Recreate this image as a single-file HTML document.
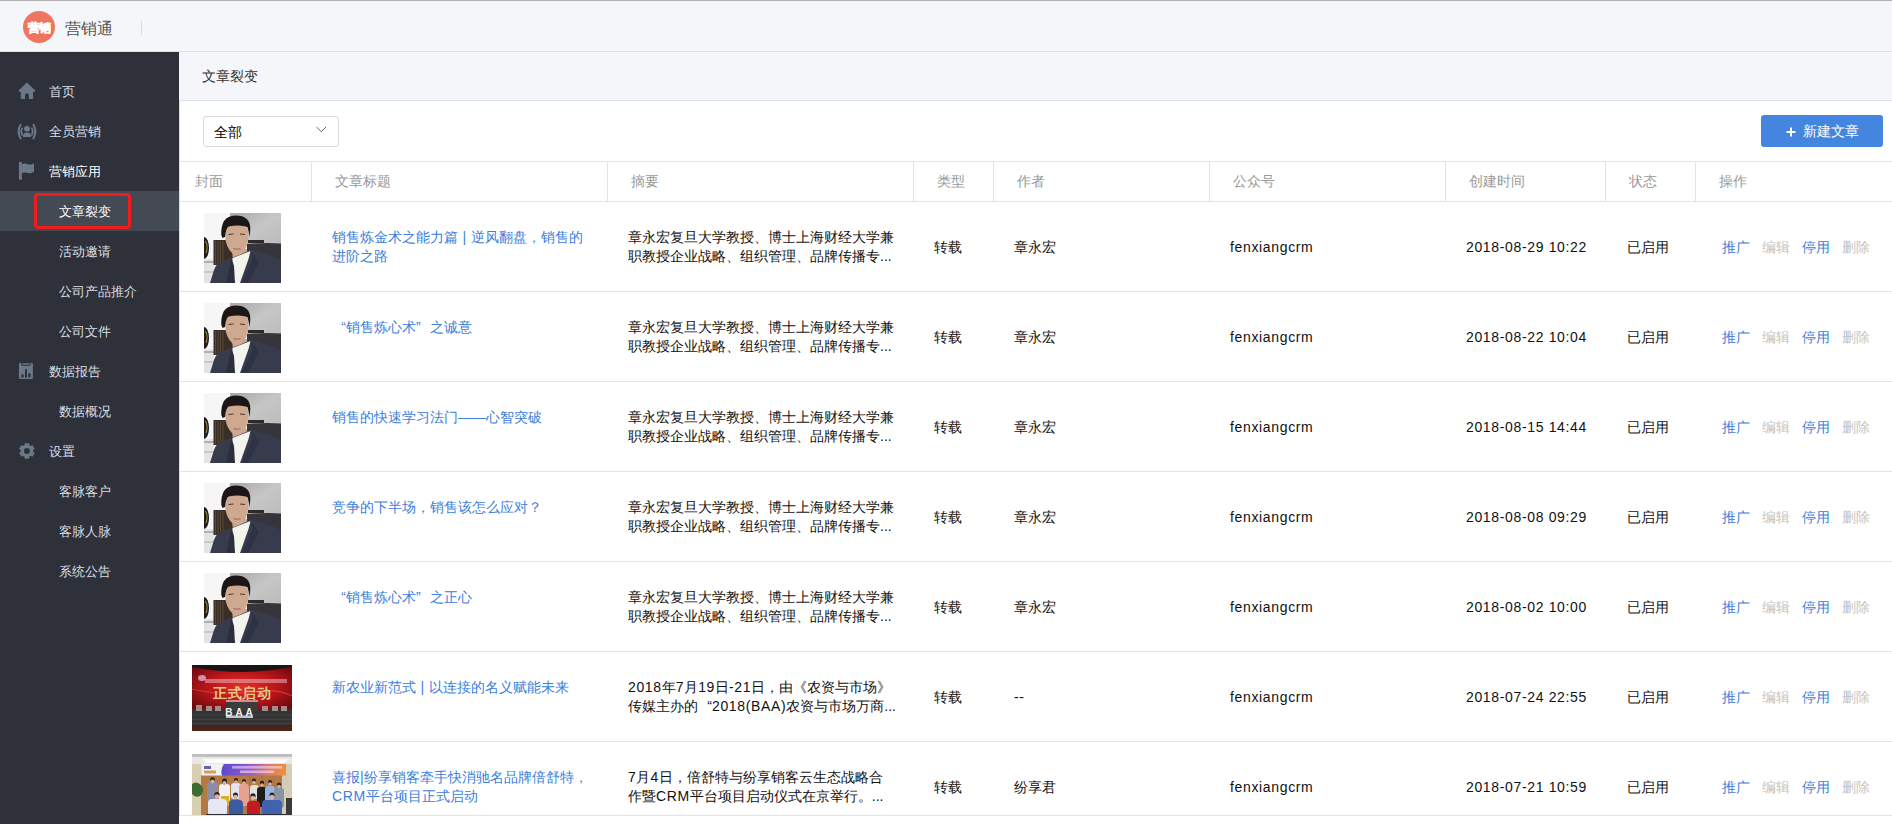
<!DOCTYPE html>
<html><head><meta charset="utf-8">
<style>
*{margin:0;padding:0;box-sizing:border-box}
html,body{width:1892px;height:824px;overflow:hidden;background:#fff;font-family:"Liberation Sans",sans-serif;color:#333}
.abs{position:absolute}
#topline{left:0;top:0;width:1892px;height:1px;background:#b0aeb0}
#header{left:0;top:1px;width:1892px;height:51px;background:#f4f6fa}
#hline{left:0;top:51px;width:1892px;height:1px;background:#e2e2e2}
#logo{left:23px;top:11px;width:32px;height:32px;border-radius:50%;background:#ee7660;color:#fff;font-size:12.5px;font-weight:900;line-height:32px;text-align:center;letter-spacing:-0.5px}
#brand{left:65px;top:17px;font-size:16px;line-height:24px;color:#555}
#sep{left:141px;top:20px;width:1px;height:15px;background:#dcdcdc}
#side{left:0;top:52px;width:179px;height:772px;background:#2e3139}
.si{position:absolute;left:0;width:179px;height:40px;line-height:40px;font-size:13px;color:#d9dde4}
.si .t{position:absolute;left:49px;top:1px}
.si.sub .t{left:59px}
.si.act{background:#434a54;color:#fff}
.si.par{color:#fff}
.si svg{position:absolute}
#redbox{left:34px;top:193px;width:97px;height:36px;border:3px solid #f21c1c;border-radius:4px}
#crumb{left:179px;top:52px;width:1713px;height:49px;background:#f4f6fa;border-bottom:1px solid #dde3ec}
#crumbt{left:202px;top:66px;font-size:14px;line-height:20px;color:#333}
#lborder{left:179px;top:100px;width:1px;height:716px;background:#dcdcdc}
#select{left:203px;top:116px;width:136px;height:31px;border:1px solid #d9d9d9;border-radius:3px;background:#fff}
#selt{left:214px;top:122px;font-size:14px;line-height:20px;color:#000}
#btn{left:1761px;top:115px;width:122px;height:32px;border-radius:3px;background:#4486df;color:#fff}
#btnt{left:1803px;top:121px;font-size:14px;line-height:20px;color:#fff}
.hl{position:absolute;height:1px;background:#e3e3e3}
.vl{position:absolute;width:1px;background:#e3e3e3}
.th{position:absolute;top:171px;font-size:14px;line-height:20px;color:#999;white-space:nowrap}
.cell{position:absolute;font-size:14px;line-height:19px;color:#111;white-space:nowrap}
.lat{letter-spacing:0.65px}
.link{color:#3b80dd}
.dis{color:#c4c4c4}
.one span{display:inline-block;width:40px}
.ph{position:absolute;overflow:hidden}
.ph svg{display:block}
#tbl{left:0;top:0;width:1892px;height:816px;overflow:hidden}

.ql{display:inline-block;width:14px;text-align:right}
.qr{display:inline-block;width:14px;text-align:left}

</style></head><body>
<div class="abs" id="header"></div>
<div class="abs" id="topline"></div>
<div class="abs" id="hline"></div>
<div class="abs" id="logo"><svg width="32" height="32" viewBox="0 0 32 32" style="position:absolute;left:0;top:0"><text x="16" y="20.5" font-family="Liberation Sans" font-size="12" fill="#fff" stroke="#fff" stroke-width="0.6" text-anchor="middle">营销</text></svg></div>
<div class="abs" id="brand">营销通</div>
<div class="abs" id="sep"></div>
<div class="abs" id="side"></div>
<div class="si" style="top:71px"><svg style="left:0;top:0" width="48" height="40" viewBox="0 0 48 40"><path fill="#6a7888" d="M26.9 11.4 L35.3 19.4 Q35.5 20.8 34 20.8 L33.1 20.8 L33.1 27.3 Q33.1 28.1 32.3 28.1 L28.8 28.1 L28.8 23.8 Q28.8 22.5 26.9 22.5 Q25 22.5 25 23.8 L25 28.1 L21.6 28.1 Q20.8 28.1 20.8 27.3 L20.8 20.8 L19.8 20.8 Q18.3 20.8 18.5 19.4 Z"/></svg><span class="t">首页</span></div>
<div class="si" style="top:111px"><svg style="left:0;top:0" width="48" height="40" viewBox="0 0 48 40"><g fill="none" stroke="#6a7888" stroke-linecap="round"><path d="M20.6 13.8 Q16.6 20.5 20.6 27.4" stroke-width="2"/><path d="M33.4 13.8 Q37.4 20.5 33.4 27.4" stroke-width="2"/><path d="M22.2 17.2 Q20.2 20.5 22.2 24" stroke-width="1.6"/><path d="M31.8 17.2 Q33.8 20.5 31.8 24" stroke-width="1.6"/></g><circle cx="27" cy="17.7" r="2.9" fill="#6a7888"/><path fill="#6a7888" d="M22.8 26 Q22.8 21.6 27 21.6 Q31.2 21.6 31.2 26 Z"/></svg><span class="t">全员营销</span></div>
<div class="si par" style="top:151px"><svg style="left:0;top:0" width="48" height="40" viewBox="0 0 48 40"><rect x="18.9" y="10.8" width="3" height="18.1" rx="1.2" fill="#6a7888"/><path fill="#6a7888" d="M21.5 13.2 Q25 11.8 28.2 13.3 Q31.6 14.6 34 11.9 L34 20.6 Q31.5 23.1 28 22 Q24.8 20.8 21.5 22.3 Z"/></svg><span class="t">营销应用</span></div>
<div class="si sub act" style="top:191px"><span class="t">文章裂变</span></div>
<div class="si sub" style="top:231px"><span class="t">活动邀请</span></div>
<div class="si sub" style="top:271px"><span class="t">公司产品推介</span></div>
<div class="si sub" style="top:311px"><span class="t">公司文件</span></div>
<div class="si" style="top:351px"><svg style="left:0;top:0" width="48" height="40" viewBox="0 0 48 40"><path fill="#6a7888" fill-rule="evenodd" d="M20.4 11.7 L31.4 11.7 Q32.9 11.7 32.9 13.2 L32.9 26.5 Q32.9 28 31.4 28 L20.4 28 Q18.9 28 18.9 26.5 L18.9 13.2 Q18.9 11.7 20.4 11.7 Z M21.3 11.7 L21.3 13.7 Q21.3 14.8 22.4 14.8 L29.6 14.8 Q30.7 14.8 30.7 13.7 L30.7 11.7 Z"/><rect x="22.5" y="12.2" width="7.3" height="1.6" rx="0.6" fill="#6a7888"/><ellipse cx="22.5" cy="24.9" rx="1.2" ry="1.9" fill="#2e3139"/><rect x="25" y="17.9" width="2" height="8.9" rx="0.8" fill="#2e3139"/><ellipse cx="29.4" cy="24.4" rx="1.25" ry="2.4" fill="#2e3139"/></svg><span class="t">数据报告</span></div>
<div class="si sub" style="top:391px"><span class="t">数据概况</span></div>
<div class="si" style="top:431px"><svg style="left:0;top:0" width="48" height="40" viewBox="0 0 48 40"><path fill="#6a7888" fill-rule="evenodd" d="M30.56 14.77 L29.12 14.00 L29.20 12.13 L24.60 12.13 L24.68 14.00 L23.24 14.77 L24.29 14.17 L22.90 15.03 L21.32 14.02 L19.02 18.01 L20.68 18.87 L20.63 20.51 L20.63 19.29 L20.68 20.93 L19.02 21.79 L21.32 25.78 L22.90 24.77 L24.29 25.63 L23.24 25.03 L24.68 25.80 L24.60 27.67 L29.20 27.67 L29.12 25.80 L30.56 25.03 L29.51 25.63 L30.90 24.77 L32.48 25.78 L34.78 21.79 L33.12 20.93 L33.17 19.29 L33.17 20.51 L33.12 18.87 L34.78 18.01 L32.48 14.02 L30.90 15.03 L29.51 14.17 Z M29.90 19.90 A3.0 3.0 0 1 0 23.90 19.90 A3.0 3.0 0 1 0 29.90 19.90 Z"/></svg><span class="t">设置</span></div>
<div class="si sub" style="top:471px"><span class="t">客脉客户</span></div>
<div class="si sub" style="top:511px"><span class="t">客脉人脉</span></div>
<div class="si sub" style="top:551px"><span class="t">系统公告</span></div>
<div class="abs" id="redbox"></div>
<div class="abs" id="crumb"></div>
<div class="abs" id="lborder"></div>
<div class="abs" id="crumbt">文章裂变</div>
<div class="abs" id="select"></div>
<div class="abs" id="selt">全部</div>
<svg class="abs" style="left:316px;top:126px" width="11" height="7" viewBox="0 0 11 7"><path d="M0.6 1 L5.3 5.7 L10 1" fill="none" stroke="#666" stroke-width="1"/></svg>
<div class="abs" id="btn"></div>
<svg class="abs" style="left:1786px;top:127px" width="10" height="10" viewBox="0 0 10 10"><path d="M5 0.5V9.5M0.5 5H9.5" stroke="#fff" stroke-width="2"/></svg>
<div class="abs" id="btnt">新建文章</div>
<div class="abs" id="tbl">
<div class="hl" style="left:180px;top:161px;width:1712px"></div>
<div class="hl" style="left:180px;top:201px;width:1712px"></div>
<div class="th" style="left:195px">封面</div>
<div class="vl" style="left:311px;top:162px;height:39px"></div>
<div class="th" style="left:335px">文章标题</div>
<div class="vl" style="left:607px;top:162px;height:39px"></div>
<div class="th" style="left:631px">摘要</div>
<div class="vl" style="left:913px;top:162px;height:39px"></div>
<div class="th" style="left:937px">类型</div>
<div class="vl" style="left:993px;top:162px;height:39px"></div>
<div class="th" style="left:1017px">作者</div>
<div class="vl" style="left:1209px;top:162px;height:39px"></div>
<div class="th" style="left:1233px">公众号</div>
<div class="vl" style="left:1445px;top:162px;height:39px"></div>
<div class="th" style="left:1469px">创建时间</div>
<div class="vl" style="left:1605px;top:162px;height:39px"></div>
<div class="th" style="left:1629px">状态</div>
<div class="vl" style="left:1695px;top:162px;height:39px"></div>
<div class="th" style="left:1719px">操作</div>
<div class="hl" style="left:180px;top:291px;width:1712px"></div>
<div class="ph" style="left:204px;top:213px;width:77px;height:70px"><svg width="77" height="70" viewBox="0 0 77 70"><defs><filter id="sb" x="-2%" y="-2%" width="104%" height="104%"><feGaussianBlur stdDeviation="0.45"/></filter><linearGradient id="wall" x1="0" y1="0" x2="1" y2="1"><stop offset="0" stop-color="#a8a8a8"/><stop offset="0.5" stop-color="#c6c6c6"/><stop offset="1" stop-color="#bcbcbc"/></linearGradient></defs>
<g filter="url(#sb)"><rect width="77" height="70" fill="#f6f6f6"/>
<rect x="26" y="0" width="51" height="31" fill="url(#wall)"/>
<rect x="0" y="46" width="10" height="24" fill="#e4e4e4"/>
<rect x="0" y="48" width="10" height="2" fill="#b0b0b0"/>
<rect x="0" y="58" width="10" height="2" fill="#c8c8c8"/>
<rect x="9.5" y="27" width="22" height="25" fill="#3a2f27"/>
<path d="M11.5 28 V51 M14 28 V51 M16.5 28 V51 M19 28 V51" stroke="#65553f" stroke-width="0.7"/>
<rect x="44" y="27" width="16" height="3" fill="#2e2c2c"/>
<path d="M43 31 Q60 29.5 77 30.5 L77 52 L43 52 Z" fill="#36363b"/>
<ellipse cx="0" cy="35" rx="5" ry="11" fill="#1e1e22"/>
<path d="M1.5 28 Q4.5 33 2 40" stroke="#a88a3a" stroke-width="1.1" fill="none"/>
<path d="M28 36 L43 36 L44 47 L29 48 Z" fill="#caa48e"/>
<path d="M6 70 L10 57 Q12.5 50 18 48 L27.5 45 L47 37 Q60 40 73 45 L77 48 L77 70 Z" fill="#393b4b"/>
<path d="M28.5 45 L46.5 38 L44.5 46 L36 70 L30.5 70 L28 54 Z" fill="#f4f4ef"/>
<path d="M27.5 45 L30 53 L31 70 L22 70 Z" fill="#2c2e3e"/>
<path d="M46.5 38 L49 45 L38 70 L44 70 L55 49 Z" fill="#2e3044"/>
<path d="M21 22 Q21 10 32.7 10.5 Q44.5 11 44.3 23 Q44 34 38.5 40 Q33.5 44 28.5 40.5 Q21.5 34 21 22 Z" fill="#cfa890"/>
<path d="M17.3 22 Q16.5 3 31 2.5 Q46.5 2.2 46.3 16 L45.8 24 Q44.6 18 43.5 14 Q36 11.2 24.5 13.5 Q21.5 16 21 24 L18.5 25 Z" fill="#1b1919"/>
<path d="M24.5 21.5 L29.5 21 M36 21 L41 21.5" stroke="#4a3a30" stroke-width="1.1"/>
<path d="M29.5 35.5 Q33 37 36.5 35.5" stroke="#b07a70" stroke-width="1.4" fill="none"/>
</g></svg></div>
<div class="cell link" style="left:332px;top:228px">销售炼金术之能力篇<span class="lat"> | </span>逆风翻盘，销售的<br>进阶之路</div>
<div class="cell" style="left:628px;top:228px">章永宏复旦大学教授、博士上海财经大学兼<br>职教授企业战略、组织管理、品牌传播专...</div>
<div class="cell one" style="left:934px;top:238px">转载</div>
<div class="cell one" style="left:1014px;top:238px">章永宏</div>
<div class="cell one lat" style="left:1230px;top:238px">fenxiangcrm</div>
<div class="cell one lat" style="left:1466px;top:238px">2018-08-29 10:22</div>
<div class="cell one" style="left:1627px;top:238px">已启用</div>
<div class="cell one" style="left:1722px;top:238px"><span class="link">推广</span><span class="dis">编辑</span><span class="link">停用</span><span class="dis">删除</span></div>
<div class="hl" style="left:180px;top:381px;width:1712px"></div>
<div class="ph" style="left:204px;top:303px;width:77px;height:70px"><svg width="77" height="70" viewBox="0 0 77 70"><defs><filter id="sb" x="-2%" y="-2%" width="104%" height="104%"><feGaussianBlur stdDeviation="0.45"/></filter><linearGradient id="wall" x1="0" y1="0" x2="1" y2="1"><stop offset="0" stop-color="#a8a8a8"/><stop offset="0.5" stop-color="#c6c6c6"/><stop offset="1" stop-color="#bcbcbc"/></linearGradient></defs>
<g filter="url(#sb)"><rect width="77" height="70" fill="#f6f6f6"/>
<rect x="26" y="0" width="51" height="31" fill="url(#wall)"/>
<rect x="0" y="46" width="10" height="24" fill="#e4e4e4"/>
<rect x="0" y="48" width="10" height="2" fill="#b0b0b0"/>
<rect x="0" y="58" width="10" height="2" fill="#c8c8c8"/>
<rect x="9.5" y="27" width="22" height="25" fill="#3a2f27"/>
<path d="M11.5 28 V51 M14 28 V51 M16.5 28 V51 M19 28 V51" stroke="#65553f" stroke-width="0.7"/>
<rect x="44" y="27" width="16" height="3" fill="#2e2c2c"/>
<path d="M43 31 Q60 29.5 77 30.5 L77 52 L43 52 Z" fill="#36363b"/>
<ellipse cx="0" cy="35" rx="5" ry="11" fill="#1e1e22"/>
<path d="M1.5 28 Q4.5 33 2 40" stroke="#a88a3a" stroke-width="1.1" fill="none"/>
<path d="M28 36 L43 36 L44 47 L29 48 Z" fill="#caa48e"/>
<path d="M6 70 L10 57 Q12.5 50 18 48 L27.5 45 L47 37 Q60 40 73 45 L77 48 L77 70 Z" fill="#393b4b"/>
<path d="M28.5 45 L46.5 38 L44.5 46 L36 70 L30.5 70 L28 54 Z" fill="#f4f4ef"/>
<path d="M27.5 45 L30 53 L31 70 L22 70 Z" fill="#2c2e3e"/>
<path d="M46.5 38 L49 45 L38 70 L44 70 L55 49 Z" fill="#2e3044"/>
<path d="M21 22 Q21 10 32.7 10.5 Q44.5 11 44.3 23 Q44 34 38.5 40 Q33.5 44 28.5 40.5 Q21.5 34 21 22 Z" fill="#cfa890"/>
<path d="M17.3 22 Q16.5 3 31 2.5 Q46.5 2.2 46.3 16 L45.8 24 Q44.6 18 43.5 14 Q36 11.2 24.5 13.5 Q21.5 16 21 24 L18.5 25 Z" fill="#1b1919"/>
<path d="M24.5 21.5 L29.5 21 M36 21 L41 21.5" stroke="#4a3a30" stroke-width="1.1"/>
<path d="M29.5 35.5 Q33 37 36.5 35.5" stroke="#b07a70" stroke-width="1.4" fill="none"/>
</g></svg></div>
<div class="cell link" style="left:332px;top:318px"><span class="ql">“</span>销售炼心术<span class="qr">”</span>之诚意</div>
<div class="cell" style="left:628px;top:318px">章永宏复旦大学教授、博士上海财经大学兼<br>职教授企业战略、组织管理、品牌传播专...</div>
<div class="cell one" style="left:934px;top:328px">转载</div>
<div class="cell one" style="left:1014px;top:328px">章永宏</div>
<div class="cell one lat" style="left:1230px;top:328px">fenxiangcrm</div>
<div class="cell one lat" style="left:1466px;top:328px">2018-08-22 10:04</div>
<div class="cell one" style="left:1627px;top:328px">已启用</div>
<div class="cell one" style="left:1722px;top:328px"><span class="link">推广</span><span class="dis">编辑</span><span class="link">停用</span><span class="dis">删除</span></div>
<div class="hl" style="left:180px;top:471px;width:1712px"></div>
<div class="ph" style="left:204px;top:393px;width:77px;height:70px"><svg width="77" height="70" viewBox="0 0 77 70"><defs><filter id="sb" x="-2%" y="-2%" width="104%" height="104%"><feGaussianBlur stdDeviation="0.45"/></filter><linearGradient id="wall" x1="0" y1="0" x2="1" y2="1"><stop offset="0" stop-color="#a8a8a8"/><stop offset="0.5" stop-color="#c6c6c6"/><stop offset="1" stop-color="#bcbcbc"/></linearGradient></defs>
<g filter="url(#sb)"><rect width="77" height="70" fill="#f6f6f6"/>
<rect x="26" y="0" width="51" height="31" fill="url(#wall)"/>
<rect x="0" y="46" width="10" height="24" fill="#e4e4e4"/>
<rect x="0" y="48" width="10" height="2" fill="#b0b0b0"/>
<rect x="0" y="58" width="10" height="2" fill="#c8c8c8"/>
<rect x="9.5" y="27" width="22" height="25" fill="#3a2f27"/>
<path d="M11.5 28 V51 M14 28 V51 M16.5 28 V51 M19 28 V51" stroke="#65553f" stroke-width="0.7"/>
<rect x="44" y="27" width="16" height="3" fill="#2e2c2c"/>
<path d="M43 31 Q60 29.5 77 30.5 L77 52 L43 52 Z" fill="#36363b"/>
<ellipse cx="0" cy="35" rx="5" ry="11" fill="#1e1e22"/>
<path d="M1.5 28 Q4.5 33 2 40" stroke="#a88a3a" stroke-width="1.1" fill="none"/>
<path d="M28 36 L43 36 L44 47 L29 48 Z" fill="#caa48e"/>
<path d="M6 70 L10 57 Q12.5 50 18 48 L27.5 45 L47 37 Q60 40 73 45 L77 48 L77 70 Z" fill="#393b4b"/>
<path d="M28.5 45 L46.5 38 L44.5 46 L36 70 L30.5 70 L28 54 Z" fill="#f4f4ef"/>
<path d="M27.5 45 L30 53 L31 70 L22 70 Z" fill="#2c2e3e"/>
<path d="M46.5 38 L49 45 L38 70 L44 70 L55 49 Z" fill="#2e3044"/>
<path d="M21 22 Q21 10 32.7 10.5 Q44.5 11 44.3 23 Q44 34 38.5 40 Q33.5 44 28.5 40.5 Q21.5 34 21 22 Z" fill="#cfa890"/>
<path d="M17.3 22 Q16.5 3 31 2.5 Q46.5 2.2 46.3 16 L45.8 24 Q44.6 18 43.5 14 Q36 11.2 24.5 13.5 Q21.5 16 21 24 L18.5 25 Z" fill="#1b1919"/>
<path d="M24.5 21.5 L29.5 21 M36 21 L41 21.5" stroke="#4a3a30" stroke-width="1.1"/>
<path d="M29.5 35.5 Q33 37 36.5 35.5" stroke="#b07a70" stroke-width="1.4" fill="none"/>
</g></svg></div>
<div class="cell link" style="left:332px;top:408px">销售的快速学习法门——心智突破</div>
<div class="cell" style="left:628px;top:408px">章永宏复旦大学教授、博士上海财经大学兼<br>职教授企业战略、组织管理、品牌传播专...</div>
<div class="cell one" style="left:934px;top:418px">转载</div>
<div class="cell one" style="left:1014px;top:418px">章永宏</div>
<div class="cell one lat" style="left:1230px;top:418px">fenxiangcrm</div>
<div class="cell one lat" style="left:1466px;top:418px">2018-08-15 14:44</div>
<div class="cell one" style="left:1627px;top:418px">已启用</div>
<div class="cell one" style="left:1722px;top:418px"><span class="link">推广</span><span class="dis">编辑</span><span class="link">停用</span><span class="dis">删除</span></div>
<div class="hl" style="left:180px;top:561px;width:1712px"></div>
<div class="ph" style="left:204px;top:483px;width:77px;height:70px"><svg width="77" height="70" viewBox="0 0 77 70"><defs><filter id="sb" x="-2%" y="-2%" width="104%" height="104%"><feGaussianBlur stdDeviation="0.45"/></filter><linearGradient id="wall" x1="0" y1="0" x2="1" y2="1"><stop offset="0" stop-color="#a8a8a8"/><stop offset="0.5" stop-color="#c6c6c6"/><stop offset="1" stop-color="#bcbcbc"/></linearGradient></defs>
<g filter="url(#sb)"><rect width="77" height="70" fill="#f6f6f6"/>
<rect x="26" y="0" width="51" height="31" fill="url(#wall)"/>
<rect x="0" y="46" width="10" height="24" fill="#e4e4e4"/>
<rect x="0" y="48" width="10" height="2" fill="#b0b0b0"/>
<rect x="0" y="58" width="10" height="2" fill="#c8c8c8"/>
<rect x="9.5" y="27" width="22" height="25" fill="#3a2f27"/>
<path d="M11.5 28 V51 M14 28 V51 M16.5 28 V51 M19 28 V51" stroke="#65553f" stroke-width="0.7"/>
<rect x="44" y="27" width="16" height="3" fill="#2e2c2c"/>
<path d="M43 31 Q60 29.5 77 30.5 L77 52 L43 52 Z" fill="#36363b"/>
<ellipse cx="0" cy="35" rx="5" ry="11" fill="#1e1e22"/>
<path d="M1.5 28 Q4.5 33 2 40" stroke="#a88a3a" stroke-width="1.1" fill="none"/>
<path d="M28 36 L43 36 L44 47 L29 48 Z" fill="#caa48e"/>
<path d="M6 70 L10 57 Q12.5 50 18 48 L27.5 45 L47 37 Q60 40 73 45 L77 48 L77 70 Z" fill="#393b4b"/>
<path d="M28.5 45 L46.5 38 L44.5 46 L36 70 L30.5 70 L28 54 Z" fill="#f4f4ef"/>
<path d="M27.5 45 L30 53 L31 70 L22 70 Z" fill="#2c2e3e"/>
<path d="M46.5 38 L49 45 L38 70 L44 70 L55 49 Z" fill="#2e3044"/>
<path d="M21 22 Q21 10 32.7 10.5 Q44.5 11 44.3 23 Q44 34 38.5 40 Q33.5 44 28.5 40.5 Q21.5 34 21 22 Z" fill="#cfa890"/>
<path d="M17.3 22 Q16.5 3 31 2.5 Q46.5 2.2 46.3 16 L45.8 24 Q44.6 18 43.5 14 Q36 11.2 24.5 13.5 Q21.5 16 21 24 L18.5 25 Z" fill="#1b1919"/>
<path d="M24.5 21.5 L29.5 21 M36 21 L41 21.5" stroke="#4a3a30" stroke-width="1.1"/>
<path d="M29.5 35.5 Q33 37 36.5 35.5" stroke="#b07a70" stroke-width="1.4" fill="none"/>
</g></svg></div>
<div class="cell link" style="left:332px;top:498px">竞争的下半场，销售该怎么应对？</div>
<div class="cell" style="left:628px;top:498px">章永宏复旦大学教授、博士上海财经大学兼<br>职教授企业战略、组织管理、品牌传播专...</div>
<div class="cell one" style="left:934px;top:508px">转载</div>
<div class="cell one" style="left:1014px;top:508px">章永宏</div>
<div class="cell one lat" style="left:1230px;top:508px">fenxiangcrm</div>
<div class="cell one lat" style="left:1466px;top:508px">2018-08-08 09:29</div>
<div class="cell one" style="left:1627px;top:508px">已启用</div>
<div class="cell one" style="left:1722px;top:508px"><span class="link">推广</span><span class="dis">编辑</span><span class="link">停用</span><span class="dis">删除</span></div>
<div class="hl" style="left:180px;top:651px;width:1712px"></div>
<div class="ph" style="left:204px;top:573px;width:77px;height:70px"><svg width="77" height="70" viewBox="0 0 77 70"><defs><filter id="sb" x="-2%" y="-2%" width="104%" height="104%"><feGaussianBlur stdDeviation="0.45"/></filter><linearGradient id="wall" x1="0" y1="0" x2="1" y2="1"><stop offset="0" stop-color="#a8a8a8"/><stop offset="0.5" stop-color="#c6c6c6"/><stop offset="1" stop-color="#bcbcbc"/></linearGradient></defs>
<g filter="url(#sb)"><rect width="77" height="70" fill="#f6f6f6"/>
<rect x="26" y="0" width="51" height="31" fill="url(#wall)"/>
<rect x="0" y="46" width="10" height="24" fill="#e4e4e4"/>
<rect x="0" y="48" width="10" height="2" fill="#b0b0b0"/>
<rect x="0" y="58" width="10" height="2" fill="#c8c8c8"/>
<rect x="9.5" y="27" width="22" height="25" fill="#3a2f27"/>
<path d="M11.5 28 V51 M14 28 V51 M16.5 28 V51 M19 28 V51" stroke="#65553f" stroke-width="0.7"/>
<rect x="44" y="27" width="16" height="3" fill="#2e2c2c"/>
<path d="M43 31 Q60 29.5 77 30.5 L77 52 L43 52 Z" fill="#36363b"/>
<ellipse cx="0" cy="35" rx="5" ry="11" fill="#1e1e22"/>
<path d="M1.5 28 Q4.5 33 2 40" stroke="#a88a3a" stroke-width="1.1" fill="none"/>
<path d="M28 36 L43 36 L44 47 L29 48 Z" fill="#caa48e"/>
<path d="M6 70 L10 57 Q12.5 50 18 48 L27.5 45 L47 37 Q60 40 73 45 L77 48 L77 70 Z" fill="#393b4b"/>
<path d="M28.5 45 L46.5 38 L44.5 46 L36 70 L30.5 70 L28 54 Z" fill="#f4f4ef"/>
<path d="M27.5 45 L30 53 L31 70 L22 70 Z" fill="#2c2e3e"/>
<path d="M46.5 38 L49 45 L38 70 L44 70 L55 49 Z" fill="#2e3044"/>
<path d="M21 22 Q21 10 32.7 10.5 Q44.5 11 44.3 23 Q44 34 38.5 40 Q33.5 44 28.5 40.5 Q21.5 34 21 22 Z" fill="#cfa890"/>
<path d="M17.3 22 Q16.5 3 31 2.5 Q46.5 2.2 46.3 16 L45.8 24 Q44.6 18 43.5 14 Q36 11.2 24.5 13.5 Q21.5 16 21 24 L18.5 25 Z" fill="#1b1919"/>
<path d="M24.5 21.5 L29.5 21 M36 21 L41 21.5" stroke="#4a3a30" stroke-width="1.1"/>
<path d="M29.5 35.5 Q33 37 36.5 35.5" stroke="#b07a70" stroke-width="1.4" fill="none"/>
</g></svg></div>
<div class="cell link" style="left:332px;top:588px"><span class="ql">“</span>销售炼心术<span class="qr">”</span>之正心</div>
<div class="cell" style="left:628px;top:588px">章永宏复旦大学教授、博士上海财经大学兼<br>职教授企业战略、组织管理、品牌传播专...</div>
<div class="cell one" style="left:934px;top:598px">转载</div>
<div class="cell one" style="left:1014px;top:598px">章永宏</div>
<div class="cell one lat" style="left:1230px;top:598px">fenxiangcrm</div>
<div class="cell one lat" style="left:1466px;top:598px">2018-08-02 10:00</div>
<div class="cell one" style="left:1627px;top:598px">已启用</div>
<div class="cell one" style="left:1722px;top:598px"><span class="link">推广</span><span class="dis">编辑</span><span class="link">停用</span><span class="dis">删除</span></div>
<div class="hl" style="left:180px;top:741px;width:1712px"></div>
<div class="ph" style="left:192px;top:665px;width:100px;height:66px"><svg width="100" height="66" viewBox="0 0 100 66"><defs><radialGradient id="red" cx="0.5" cy="0.45" r="0.65"><stop offset="0" stop-color="#e03028"/><stop offset="0.55" stop-color="#b8141a"/><stop offset="1" stop-color="#6a0a0e"/></radialGradient></defs>
<rect width="100" height="66" fill="#1a1414"/>
<path d="M0 2 Q50 12 100 2 L100 46 L0 46 Z" fill="url(#red)"/>
<path d="M0 24 Q30 31 60 27 Q85 23 100 31" stroke="#f06060" stroke-width="1.2" fill="none" opacity="0.5"/>
<ellipse cx="10" cy="13" rx="4" ry="3" fill="#e0c8f0" opacity="0.7"/>
<rect x="13" y="14" width="82" height="4" fill="#f0c0d0" opacity="0.5"/>
<text x="50" y="33" font-family="Liberation Sans" font-size="14" font-weight="bold" fill="#e8c888" text-anchor="middle" letter-spacing="0.5">正式启动</text>
<rect x="34" y="35" width="32" height="2" fill="#f8e8e8" opacity="0.55"/>
<rect x="0" y="44" width="100" height="17" fill="#343434"/>
<path d="M0 50 H100 M0 54.5 H100 M0 58.5 H100" stroke="#474747" stroke-width="0.8"/>
<rect x="33" y="37" width="33" height="9" fill="#3c3c3e"/>
<g fill="#b8b0b0" opacity="0.75"><rect x="4" y="40" width="6" height="6"/><rect x="14" y="41" width="6" height="5"/><rect x="23" y="41" width="6" height="5"/><rect x="70" y="41" width="6" height="5"/><rect x="80" y="41" width="6" height="5"/><rect x="89" y="41" width="6" height="5"/></g>
<rect x="34" y="50.5" width="27" height="2.5" fill="#e8e8f0" opacity="0.8"/>
<text x="48.5" y="50.5" font-family="Liberation Sans" font-size="10" font-weight="bold" fill="#f4f4f4" text-anchor="middle" letter-spacing="3">BAA</text>
<rect x="0" y="60" width="100" height="6" fill="#4a2418"/>
</svg></div>
<div class="cell link" style="left:332px;top:678px">新农业新范式<span class="lat"> | </span>以连接的名义赋能未来</div>
<div class="cell" style="left:628px;top:678px"><span class="lat">2018</span>年<span class="lat">7</span>月<span class="lat">19</span>日<span class="lat">-21</span>日，由《农资与市场》<br>传媒主办的<span class="ql">“</span><span class="lat">2018(BAA)</span>农资与市场万商...</div>
<div class="cell one" style="left:934px;top:688px">转载</div>
<div class="cell one" style="left:1014px;top:688px"><span class="lat">--</span></div>
<div class="cell one lat" style="left:1230px;top:688px">fenxiangcrm</div>
<div class="cell one lat" style="left:1466px;top:688px">2018-07-24 22:55</div>
<div class="cell one" style="left:1627px;top:688px">已启用</div>
<div class="cell one" style="left:1722px;top:688px"><span class="link">推广</span><span class="dis">编辑</span><span class="link">停用</span><span class="dis">删除</span></div>
<div class="ph" style="left:192px;top:754px;width:100px;height:66px"><svg width="100" height="66" viewBox="0 0 100 66"><defs><linearGradient id="ban" x1="0" y1="0" x2="1" y2="0"><stop offset="0" stop-color="#5a48d0"/><stop offset="0.45" stop-color="#9a5ac8"/><stop offset="0.75" stop-color="#e07a70"/><stop offset="1" stop-color="#f09030"/></linearGradient></defs>
<rect width="100" height="66" fill="#dcd4bc"/>
<rect x="0" y="0" width="100" height="3" fill="#bfbfbf"/>
<path d="M0 3 L100 3 L100 10 L0 10 Z" fill="#e8e8e8"/>
<path d="M10 5 L98 5 L92 9 L14 9 Z" fill="#fbfbfb"/>
<rect x="0" y="10" width="10" height="56" fill="#d8d0b0"/>
<rect x="90" y="10" width="10" height="56" fill="#d4ccb4"/>
<rect x="9" y="21" width="81" height="41" fill="#b47a46"/>
<path d="M22 21 V62 M34 21 V62 M46 21 V62 M58 21 V62 M70 21 V62 M82 21 V62" stroke="#9c6838" stroke-width="0.6"/>
<rect x="9.5" y="10" width="21" height="11.5" fill="#f2f2f6"/>
<rect x="12" y="12" width="7" height="3" fill="#6a60a8"/>
<rect x="12" y="16.5" width="12" height="3" fill="#d8a050"/>
<path d="M32 10 L94 10 L94 21.5 L30 21.5 Q28 16 32 10 Z" fill="url(#ban)"/>
<rect x="40" y="12" width="50" height="2.6" fill="#f0e8ff" opacity="0.55"/>
<rect x="48" y="16.5" width="34" height="2.6" fill="#fff0e0" opacity="0.55"/>
<path d="M0 30 Q5 26 10 32 Q13 38 8 42 Q3 44 0 40 Z" fill="#3e6a34"/>
<rect x="94" y="44" width="6" height="22" fill="#3a3a3a"/>
<g>
<rect x="15" y="28" width="11" height="20" rx="3" fill="#8a8ca8"/>
<rect x="27" y="30" width="11" height="18" rx="3" fill="#f2f0f0"/>
<rect x="29" y="42" width="8" height="10" fill="#d8b030"/>
<rect x="39" y="29" width="10" height="16" rx="3" fill="#e4e4f0"/>
<rect x="47" y="30" width="10" height="22" rx="3" fill="#e8a090"/>
<rect x="58" y="31" width="9" height="14" rx="3" fill="#e2e2e2"/>
<rect x="65" y="33" width="10" height="20" rx="3" fill="#1e1e1e"/>
<rect x="73" y="32" width="10" height="16" rx="3" fill="#98b4e0"/>
<rect x="82" y="34" width="10" height="20" rx="3" fill="#8a94a4"/>
<g fill="#262222"><circle cx="20.5" cy="25.5" r="2.3"/><circle cx="32.5" cy="27" r="2.5"/><circle cx="44" cy="26" r="2"/><circle cx="52" cy="27" r="2"/><circle cx="62" cy="26.5" r="2"/><circle cx="70" cy="29" r="2.2"/><circle cx="78" cy="28" r="2"/><circle cx="87" cy="30.5" r="2.1"/></g>
<g fill="#d4ac98"><circle cx="20.5" cy="27.5" r="2"/><circle cx="32.5" cy="29" r="2"/><circle cx="44" cy="28" r="1.8"/><circle cx="52" cy="29" r="1.8"/><circle cx="62" cy="28.5" r="1.8"/><circle cx="70" cy="31" r="1.8"/><circle cx="78" cy="30" r="1.8"/><circle cx="87" cy="32.5" r="1.8"/></g>
<rect x="16" y="45" width="19" height="17" rx="4" fill="#e6e8f6"/>
<rect x="37" y="46" width="14" height="16" rx="4" fill="#3b5aa0"/>
<rect x="55" y="47" width="13" height="19" rx="4" fill="#c41a22"/>
<rect x="70" y="46" width="20" height="16" rx="4" fill="#4262b0"/>
<rect x="14" y="60" width="80" height="6" fill="#2a2a30"/>
<g fill="#262222"><circle cx="25" cy="40.5" r="2.6"/><circle cx="43.5" cy="41" r="2.5"/><circle cx="61" cy="42" r="2.7"/><circle cx="80" cy="41" r="2.5"/></g>
<g fill="#d8b4a0"><circle cx="25" cy="42.5" r="2.3"/><circle cx="43.5" cy="43" r="2.2"/><circle cx="61" cy="44" r="2.2"/><circle cx="80" cy="43" r="2.2"/></g>
</g>
</svg></div>
<div class="cell link" style="left:332px;top:768px">喜报<span class="lat">|</span>纷享销客牵手快消驰名品牌倍舒特，<br><span class="lat">CRM</span>平台项目正式启动</div>
<div class="cell" style="left:628px;top:768px"><span class="lat">7</span>月<span class="lat">4</span>日，倍舒特与纷享销客云生态战略合<br>作暨<span class="lat">CRM</span>平台项目启动仪式在京举行。...</div>
<div class="cell one" style="left:934px;top:778px">转载</div>
<div class="cell one" style="left:1014px;top:778px">纷享君</div>
<div class="cell one lat" style="left:1230px;top:778px">fenxiangcrm</div>
<div class="cell one lat" style="left:1466px;top:778px">2018-07-21 10:59</div>
<div class="cell one" style="left:1627px;top:778px">已启用</div>
<div class="cell one" style="left:1722px;top:778px"><span class="link">推广</span><span class="dis">编辑</span><span class="link">停用</span><span class="dis">删除</span></div>
<div class="hl" style="left:180px;top:815px;width:1712px"></div>
</div>
<div class="abs" id="bottomwhite"></div>
</body></html>
